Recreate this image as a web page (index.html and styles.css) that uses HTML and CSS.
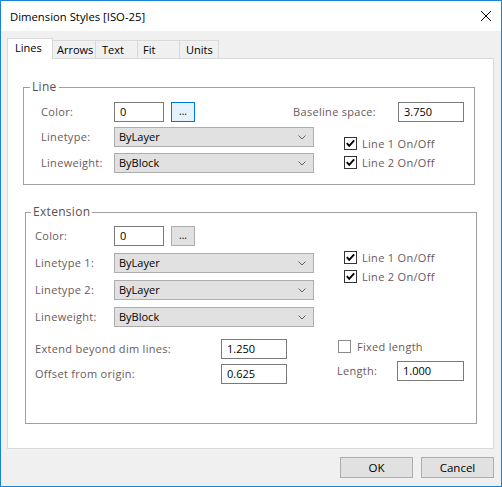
FILE: index.html
```html
<!DOCTYPE html>
<html>
<head>
<title>Dimension Styles</title>
<link rel="stylesheet" href="styles.css">
</head>
<body>

<div class="window">
    <div class="titlebar">
        <span class="title">Dimension Styles [ISO-25]</span>
        <svg class="close" viewBox="0 0 10 10"><path d="M0 0L10 10M10 0L0 10"/></svg>
    </div>

    <div class="client">
        <!-- Tab strip -->
        <div class="tabs">
            <div class="tab tab-lines active">Lines</div>
            <div class="tab tab-arrows">Arrows</div>
            <div class="tab tab-text">Text</div>
            <div class="tab tab-fit">Fit</div>
            <div class="tab tab-units">Units</div>
        </div>

        <div class="panel">
            <!-- Line group -->
            <fieldset class="group group-line">
                <legend>Line</legend>
                <div class="row">
                    <span class="lbl">Color:</span>
                    <div class="edit edit-color">0</div>
                    <div class="dots focused">...</div>
                    <span class="lbl-right">Baseline space:</span>
                    <div class="edit edit-num">3.750</div>
                </div>
                <div class="split">
                    <div class="combos">
                        <div class="row">
                            <span class="lbl">Linetype:</span>
                            <div class="combo">ByLayer<svg viewBox="0 0 8 5"><path d="M0.5 0.5L4 4L7.5 0.5"/></svg></div>
                        </div>
                        <div class="row">
                            <span class="lbl">Lineweight:</span>
                            <div class="combo">ByBlock<svg viewBox="0 0 8 5"><path d="M0.5 0.5L4 4L7.5 0.5"/></svg></div>
                        </div>
                    </div>
                    <div class="checks">
                        <div class="check-row">
                            <span class="box"><svg viewBox="0 0 11 11"><path d="M1.8 5.2L4.2 7.8L9.2 2.4"/></svg></span>
                            <span>Line 1 On/Off</span>
                        </div>
                        <div class="check-row">
                            <span class="box"><svg viewBox="0 0 11 11"><path d="M1.8 5.2L4.2 7.8L9.2 2.4"/></svg></span>
                            <span>Line 2 On/Off</span>
                        </div>
                    </div>
                </div>
            </fieldset>

            <!-- Extension group -->
            <fieldset class="group group-ext">
                <legend>Extension</legend>
                <div class="row">
                    <span class="lbl">Color:</span>
                    <div class="edit edit-color">0</div>
                    <div class="dots">...</div>
                </div>
                <div class="split">
                    <div class="combos">
                        <div class="row">
                            <span class="lbl">Linetype 1:</span>
                            <div class="combo">ByLayer<svg viewBox="0 0 8 5"><path d="M0.5 0.5L4 4L7.5 0.5"/></svg></div>
                        </div>
                        <div class="row">
                            <span class="lbl">Linetype 2:</span>
                            <div class="combo">ByLayer<svg viewBox="0 0 8 5"><path d="M0.5 0.5L4 4L7.5 0.5"/></svg></div>
                        </div>
                        <div class="row">
                            <span class="lbl">Lineweight:</span>
                            <div class="combo">ByBlock<svg viewBox="0 0 8 5"><path d="M0.5 0.5L4 4L7.5 0.5"/></svg></div>
                        </div>
                    </div>
                    <div class="checks">
                        <div class="check-row">
                            <span class="box"><svg viewBox="0 0 11 11"><path d="M1.8 5.2L4.2 7.8L9.2 2.4"/></svg></span>
                            <span>Line 1 On/Off</span>
                        </div>
                        <div class="check-row">
                            <span class="box"><svg viewBox="0 0 11 11"><path d="M1.8 5.2L4.2 7.8L9.2 2.4"/></svg></span>
                            <span>Line 2 On/Off</span>
                        </div>
                    </div>
                </div>
                <div class="offsets">
                    <div class="combos">
                        <div class="row">
                            <span class="lbl lbl-wide">Extend beyond dim lines:</span>
                            <div class="edit edit-num">1.250</div>
                        </div>
                        <div class="row">
                            <span class="lbl lbl-wide">Offset from origin:</span>
                            <div class="edit edit-num">0.625</div>
                        </div>
                    </div>
                    <div class="fixed">
                        <div class="check-row fixed-row">
                            <span class="box empty"></span>
                            <span>Fixed length</span>
                        </div>
                        <div class="row">
                            <span class="lbl lbl-len">Length:</span>
                            <div class="edit edit-len">1.000</div>
                        </div>
                    </div>
                </div>
            </fieldset>
        </div>

        <!-- Dialog buttons -->
        <div class="buttons">
            <div class="btn">OK</div>
            <div class="btn">Cancel</div>
        </div>
    </div>
</div>

</body>
</html>
```

FILE: styles.css
```css
* {
    box-sizing: border-box;
}

body {
    margin: 0;
    font-family: 'Open Sans', 'Liberation Sans', sans-serif;
    font-size: 11px;
    color: #000;
}

.window {
    width: 502px;
    height: 487px;
    border: 1px solid #1883d7;
    background: #f0f0f0;
    display: flex;
    flex-direction: column;
}

.titlebar {
    height: 30px;
    flex-shrink: 0;
    background: #fff;
    display: flex;
    align-items: center;
    padding: 0 10px 0 9px;
}

.title {
    flex: 1;
    font-size: 11.3px;
}

.close {
    width: 10px;
    height: 10px;
    stroke: #000;
    stroke-width: 1;
    fill: none;
}

.client {
    padding: 7px 7px 8px 6px;
}

/* tabs */
.tabs {
    display: flex;
    align-items: flex-end;
    height: 20px;
}

.tab {
    height: 18px;
    border: 1px solid #d9d9d9;
    border-bottom: none;
    margin-left: -1px;
    padding-left: 6px;
    background: #f0f0f0;
    line-height: 17px;
    font-size: 11px;
}

.tab.active {
    position: relative;
    height: 21px;
    margin-left: 0;
    margin-bottom: -1px;
    background: #fff;
    line-height: 18px;
}

.tab-lines { width: 46px; padding-left: 7px; }
.tab-arrows { width: 44px; padding-left: 4px; }
.tab-text { width: 43px; }
.tab-fit { width: 43px; padding-left: 5px; }
.tab-units { width: 40px; }

.panel {
    height: 391px;
    background: #fff;
    border: 1px solid #d9d9d9;
    padding-top: 20px;
}

/* group boxes */
.group {
    border: 1px solid #a0a0a0;
    margin: 0;
    padding: 0;
    min-width: 0;
}

.group legend {
    padding: 0 2px;
    line-height: 16px;
    font-size: 12px;
    color: #5e4f4f;
    letter-spacing: 0.3px;
}

.group-line {
    margin: 0 18px 0 15px;
    padding: 7px 10px 11px 17px;
}

.group-line legend { margin-left: -11px; }

.group-ext {
    margin: 19px 16px 0 17px;
    padding: 6px 12px 39px 9px;
}

.group-ext legend { margin-left: -4px; }

.row {
    display: flex;
    align-items: center;
    height: 20px;
}

.lbl, .lbl-right, .check-row {
    color: #6a5a5a;
    letter-spacing: 0.3px;
    line-height: 20px;
}

.group-line .lbl { width: 73px; }
.group-ext .lbl { width: 79px; }
.group-ext .lbl-wide { width: 186px; }
.group-ext .lbl-len { width: 60px; }

.lbl-right {
    margin-left: auto;
    margin-right: 22px;
}

.edit {
    height: 20px;
    border: 1px solid #7a7a7a;
    background: #fff;
    padding-left: 5px;
    line-height: 18px;
}

.edit-color { width: 50px; }
.edit-num { width: 66px; }
.edit-len { width: 67px; }

.dots {
    width: 24px;
    height: 20px;
    margin-left: 7px;
    border: 1px solid #adadad;
    background: #e1e1e1;
    text-align: center;
    line-height: 17px;
    font-size: 10px;
}

.dots.focused {
    border-color: #0078d7;
    background: #e5f1fb;
}

.split {
    display: flex;
    margin-top: 5px;
}

.group-line .combos .row + .row { margin-top: 6px; }
.group-ext .combos .row + .row { margin-top: 7px; }
.group-ext .split .combos { padding-top: 2px; }
.group-ext .offsets .row + .row { margin-top: 5px; }

.combo {
    width: 200px;
    height: 20px;
    border: 1px solid #adadad;
    background: #e1e1e1;
    padding: 0 4px 0 4px;
    line-height: 18px;
    display: flex;
    align-items: center;
    justify-content: space-between;
}

.combo svg {
    width: 8px;
    height: 5px;
    margin-right: 3px;
    stroke: #606060;
    fill: none;
    stroke-width: 1;
}

/* checkboxes */
.checks {
    margin-left: 30px;
    display: flex;
    flex-direction: column;
    gap: 6px;
}

.group-line .checks { padding-top: 10px; }

.check-row {
    display: flex;
    align-items: center;
    height: 13px;
    gap: 5px;
}

.box {
    width: 13px;
    height: 13px;
    border: 1px solid #333;
    background: #fff;
    display: flex;
    align-items: center;
    justify-content: center;
}

.box svg {
    width: 11px;
    height: 11px;
    stroke: #000;
    stroke-width: 1.9;
    fill: none;
}

.box.empty {
    border-color: #8c8c8c;
}

.offsets {
    display: flex;
    margin-top: 12px;
}

.fixed {
    margin-left: auto;
    width: 127px;
}

.fixed-row {
    margin-top: 1px;
    margin-bottom: 8px;
    padding-left: 1px;
    gap: 6px;
}

/* dialog buttons */
.buttons {
    display: flex;
    justify-content: flex-end;
    gap: 8px;
    margin-top: 8px;
}

.btn {
    width: 73px;
    height: 21px;
    border: 1px solid #adadad;
    background: #e1e1e1;
    text-align: center;
    line-height: 19px;
    font-size: 11.5px;
}
```
